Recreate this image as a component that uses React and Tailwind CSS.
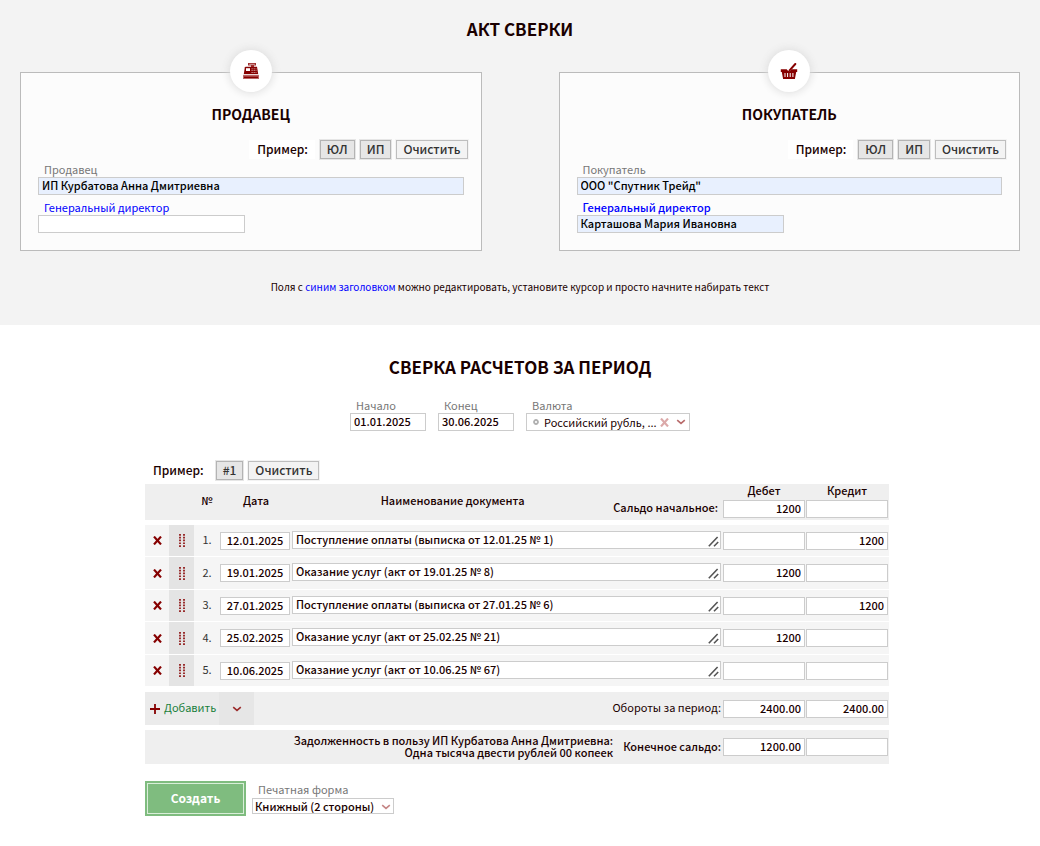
import React from "react";

const FIELD = "block w-full border border-[#cccccc] px-[3px] pb-[2px] text-[11px] leading-none outline-none";

function RegisterIcon() {
  return (
    <svg width="16" height="16" viewBox="0 0 16 16" aria-hidden="true">
      <path d="M5 0h8v2.400H11V4H8V2.400H5Z" fill="#a03030" />
      <rect x="6.200" y="0.900" width="5.600" height="0.700" fill="#e8caca" />
      <path d="M2.600 3.800H14L15.200 11H.8L1.800 4.600Z" fill="#860000" />
      <rect x="3" y="5.200" width="4" height="2.800" fill="#fff" />
      <path d="M8.500 5.400h1.200v.8H8.500zM10.600 5.400h1.200v.8h-1.200zM12.600 5.400h.8v.8h-.8zM8.500 7.200h1.200v.8H8.500zM10.600 7.200h1.200v.8h-1.200zM12.600 7.200h.8v.8h-.8zM8.500 9h1.200v.8H8.500zM10.600 9h1.200v.8h-1.200zM12.600 9h.8v.8h-.8z" fill="#e8caca" />
      <rect x="0" y="11.800" width="16" height="4.200" rx="0.600" fill="#b96464" />
      <rect x="1" y="13.600" width="14" height="1.400" fill="#860000" />
    </svg>
  );
}

function BasketIcon() {
  return (
    <svg width="18" height="17" viewBox="0 0 18 17" aria-hidden="true">
      <path d="M15.300 1 9.600 7.400" stroke="#860000" strokeWidth="2" strokeLinecap="round" />
      <path d="M.8 6.200h5.900q2.500 4 5 0h5.500v2.800h-1L14.900 16H3.100L1.800 9h-1Z" fill="#860000" />
      <path d="M5 10v4M7.600 10v4M10.200 10v4M12.900 10v4" stroke="#fff" strokeWidth="1" />
    </svg>
  );
}

function Chevron({ className }) {
  return (
    <svg className={className} width="10" height="6" viewBox="0 0 10 6" fill="none" aria-hidden="true">
      <path d="M1.200 1.200 5 4.400l3.800-3.200" stroke="currentColor" strokeWidth="1.600" />
    </svg>
  );
}

function CrossIcon({ className }) {
  return (
    <svg className={className} width="9" height="9" viewBox="0 0 9 9" fill="none" aria-hidden="true">
      <path d="M1 .6l7 7.800M8 .6 1 8.400" stroke="currentColor" strokeWidth="2.200" />
    </svg>
  );
}

function ExampleButton({ children }) {
  return (
    <button type="button" className="h-[19px] border border-[#b4b4b4] bg-[#e6e6e6] px-[6px] pb-[2px] text-[12px] leading-[15px] font-medium text-[#333333] shadow-[0_0_0_1px_#e6e6e6]">
      {children}
    </button>
  );
}

function ClearButton() {
  return (
    <button type="button" className="h-[19px] border border-[#bebebe] bg-[#f3f3f3] px-[6px] pb-[2px] text-[12px] leading-[15px] font-medium text-[#333333] shadow-[0_0_0_1px_#f3f3f3]">
      Очистить
    </button>
  );
}

function ExampleLabel() {
  return <span className="bg-white pr-[7px] pb-[2px] pl-[8px] text-[12px] leading-[17px] font-medium">Пример:</span>;
}

function Party({ id, icon, title, nameLabel, name, director }) {
  const filled = director !== "";
  return (
    <section className="min-w-0 border border-[#bbbbbb] bg-[#fcfcfc] pb-[17px]">
      <div className="mx-auto -mt-[23px] flex size-[42px] items-center justify-center rounded-full bg-white shadow-[0_0_8px_1px_#dddddd]">
        {icon}
      </div>
      <h2 className="mt-[12px] text-center text-[14px] leading-[20px] font-bold">{title}</h2>
      <div className="mt-[16px] flex items-center justify-end gap-[5px] pr-[13px]">
        <ExampleLabel />
        <ExampleButton>ЮЛ</ExampleButton>
        <ExampleButton>ИП</ExampleButton>
        <ClearButton />
      </div>
      <div className="px-[17px]">
        <label htmlFor={id + "-name"} className="mt-[2px] block pl-[6px] text-[11px] leading-[16px] text-[#777777]">
          {nameLabel}
        </label>
        <input id={id + "-name"} defaultValue={name} className={FIELD + " h-[18px] bg-[#e8f0fe] font-medium text-black"} />
        <label htmlFor={id + "-director"} className={"mt-[4px] block pl-[6px] text-[11px] leading-[16px] text-[#0000ff]" + (filled ? " font-medium" : "")}>
          Генеральный директор
        </label>
        <div className="max-w-[207px]">
          <input
            id={id + "-director"}
            defaultValue={director}
            className={FIELD + " h-[18px] font-medium text-black " + (filled ? "bg-[#e8f0fe]" : "bg-white")}
          />
        </div>
      </div>
    </section>
  );
}

const ROWS = [
  { date: "12.01.2025", name: "Поступление оплаты (выписка от 12.01.25 № 1)", debit: "", credit: "1200" },
  { date: "19.01.2025", name: "Оказание услуг (акт от 19.01.25 № 8)", debit: "1200", credit: "" },
  { date: "27.01.2025", name: "Поступление оплаты (выписка от 27.01.25 № 6)", debit: "", credit: "1200" },
  { date: "25.02.2025", name: "Оказание услуг (акт от 25.02.25 № 21)", debit: "1200", credit: "" },
  { date: "10.06.2025", name: "Оказание услуг (акт от 10.06.25 № 67)", debit: "", credit: "" },
];

function Amount({ label, value }) {
  return <input aria-label={label} defaultValue={value} className={FIELD + " h-[18px] bg-white text-right font-medium"} />;
}

function Row({ n, row }) {
  return (
    <tr className="h-[32px] bg-[#f5f5f5] even:h-[33px] [&>td]:border-b [&>td]:border-white">
      <td>
        <button type="button" aria-label="Удалить строку" className="mx-auto block text-[#860000]">
          <CrossIcon />
        </button>
      </td>
      <td className="bg-[#e4e4e4]">
        <svg className="mx-auto block" width="6" height="13" viewBox="0 0 6 13" aria-hidden="true">
          <path d="M1 0v13M5 0v13" stroke="#860000" strokeWidth="1.600" strokeDasharray="1.700 1.100" />
        </svg>
      </td>
      <td className="pb-[2px] text-center text-[11px] text-[#333333]">{n}.</td>
      <td className="pr-[2px]">
        <input aria-label={"Дата " + n} defaultValue={row.date} className={FIELD + " h-[18px] bg-white text-center font-medium"} />
      </td>
      <td className="pr-[2px] pb-[2px]">
        <div className="relative">
          <textarea
            aria-label={"Наименование документа " + n}
            rows={1}
            defaultValue={row.name}
            className={FIELD + " h-[18px] resize-none overflow-hidden bg-white !leading-[15px] font-medium"}
          />
          <svg className="absolute right-[2px] bottom-[2px]" width="11" height="11" viewBox="0 0 11 11" fill="none" aria-hidden="true">
            <path d="M.8 10.200 9.600 1M6 10.200l4.200-4.200" stroke="#555555" strokeWidth="1.600" />
          </svg>
        </div>
      </td>
      <td className="pr-[1px]"><Amount label={"Дебет " + n} value={row.debit} /></td>
      <td className="pr-[1px]"><Amount label={"Кредит " + n} value={row.credit} /></td>
    </tr>
  );
}

export default function App() {
  return (
    <main className="font-['Noto_Sans_CJK_JP','Open_Sans',sans-serif] text-[#1a0000]">
      <div className="bg-[#f3f3f3] px-[20px] pt-[17px] pb-[30px]">
        <h1 className="text-center text-[17px] leading-[24px] font-bold">АКТ СВЕРКИ</h1>
        <div className="mt-[31px] grid grid-cols-2 gap-[77px]">
          <Party id="seller" icon={<RegisterIcon />} title="ПРОДАВЕЦ" nameLabel="Продавец" name="ИП Курбатова Анна Дмитриевна" director="" />
          <Party id="buyer" icon={<BasketIcon />} title="ПОКУПАТЕЛЬ" nameLabel="Покупатель" name={'ООО "Спутник Трейд"'} director="Карташова Мария Ивановна" />
        </div>
        <p className="mt-[28px] text-center text-[10px] leading-[16px]">
          Поля с <span className="text-[#0000ff]">синим заголовком</span> можно редактировать, установите курсор и просто начните набирать текст
        </p>
      </div>

      <h2 className="mt-[30px] text-center text-[17px] leading-[24px] font-bold">СВЕРКА РАСЧЕТОВ ЗА ПЕРИОД</h2>

      <div className="mt-[19px] flex justify-center gap-[12px]">
        <div className="w-[76px]">
          <label htmlFor="start" className="block pl-[6px] text-[11px] leading-[15px] text-[#777777]">Начало</label>
          <input id="start" defaultValue="01.01.2025" className={FIELD + " h-[18px] font-medium"} />
        </div>
        <div className="w-[76px]">
          <label htmlFor="end" className="block pl-[6px] text-[11px] leading-[15px] text-[#777777]">Конец</label>
          <input id="end" defaultValue="30.06.2025" className={FIELD + " h-[18px] font-medium"} />
        </div>
        <div className="w-[164px]">
          <label htmlFor="currency" className="block pl-[6px] text-[11px] leading-[15px] text-[#777777]">Валюта</label>
          <div className="flex h-[18px] items-center border border-[#cccccc] pr-[3px] pl-[6px]">
            <svg width="6" height="6" viewBox="0 0 6 6" fill="none" aria-hidden="true">
              <circle cx="3" cy="3" r="2" stroke="#b0b0b0" strokeWidth="1.800" />
            </svg>
            <select id="currency" className="h-[16px] min-w-0 flex-1 appearance-none pl-[5px] text-[11px] leading-[16px] outline-none">
              <option>Российский рубль, ...</option>
            </select>
            <button type="button" aria-label="Очистить валюту" className="mr-[7px] text-[#dba9a9]"><CrossIcon /></button>
            <Chevron className="text-[#b86a6a]" />
          </div>
        </div>
      </div>

      <div className="mx-auto max-w-[750px] pr-[6px]">
        <div className="mt-[30px] flex items-center gap-[5px]">
          <ExampleLabel />
          <ExampleButton>#1</ExampleButton>
          <ClearButton />
        </div>

        <table className="mt-[4px] w-full table-fixed border-separate border-spacing-0 text-[11px]">
          <colgroup>
            <col className="w-[24px]" />
            <col className="w-[25px]" />
            <col className="w-[26px]" />
            <col className="w-[72px]" />
            <col />
            <col className="w-[83px]" />
            <col className="w-[83px]" />
          </colgroup>
          <thead>
            <tr className="h-[41px] bg-[#efefef] leading-[12px] [&>*]:border-b-[5px] [&>*]:border-white [&>th]:font-medium">
              <td colSpan={2} />
              <th className="pb-[4px]">№</th>
              <th className="pb-[4px]">Дата</th>
              <th>
                <div className="flex h-[36px] items-center pr-[5px]">
                  <span className="flex-1 pb-[4px]">Наименование документа</span>
                  <span className="self-end pb-[7px]">Сальдо начальное:</span>
                </div>
              </th>
              <th className="pr-[1px] align-top">
                <div className="mb-[4px]">Дебет</div>
                <Amount label="Сальдо начальное, дебет" value="1200" />
              </th>
              <th className="pr-[1px] align-top">
                <div className="mb-[4px]">Кредит</div>
                <Amount label="Сальдо начальное, кредит" value="" />
              </th>
            </tr>
          </thead>
          <tbody>
            {ROWS.map((row, i) => (
              <Row key={row.date} n={i + 1} row={row} />
            ))}
          </tbody>
          <tfoot>
            <tr className="h-[38px] bg-[#efefef] [&>td]:border-t-[5px] [&>td]:border-white">
              <td colSpan={4}>
                <div className="flex h-[33px]">
                  <button type="button" className="flex w-[74px] items-center gap-[4px] bg-[#ebebeb] pl-[5px] text-[#1a7f3c]">
                    <svg width="10" height="10" viewBox="0 0 10 10" aria-hidden="true">
                      <path d="M5 0v10M0 5h10" stroke="#860000" strokeWidth="1.800" />
                    </svg>
                    <span className="pb-[2px]">Добавить</span>
                  </button>
                  <button type="button" aria-label="Другие варианты" className="flex w-[35px] items-center justify-center bg-[#e6e6e6] text-[#9a2a2a]">
                    <Chevron />
                  </button>
                </div>
              </td>
              <td className="pr-[2px] pb-[2px] text-right">Обороты за период:</td>
              <td className="pr-[1px]"><Amount label="Обороты, дебет" value="2400.00" /></td>
              <td className="pr-[1px]"><Amount label="Обороты, кредит" value="2400.00" /></td>
            </tr>
            <tr className="h-[39px] bg-[#efefef] [&>td]:border-t-[5px] [&>td]:border-white">
              <td colSpan={5} className="pr-[2px] pb-[3px]">
                <div className="flex items-center justify-end gap-[10px] text-right leading-[12px] font-medium">
                  <p>
                    Задолженность в пользу ИП Курбатова Анна Дмитриевна:
                    <br />
                    Одна тысяча двести рублей 00 копеек
                  </p>
                  <span>Конечное сальдо:</span>
                </div>
              </td>
              <td className="pr-[1px]"><Amount label="Конечное сальдо, дебет" value="1200.00" /></td>
              <td className="pr-[1px]"><Amount label="Конечное сальдо, кредит" value="" /></td>
            </tr>
          </tfoot>
        </table>

        <div className="mt-[17px] flex gap-[6px] pb-[30px]">
          <button type="button" className="h-[35px] w-[101px] bg-[#7fbc7f] p-[2px] text-[12px] font-bold text-white">
            <span className="flex h-full items-center justify-center border border-[#d9eed9] pb-[2px]">Создать</span>
          </button>
          <div className="w-[142px]">
            <label htmlFor="form" className="mb-[1px] block pl-[6px] text-[11px] leading-[16px] text-[#777777]">Печатная форма</label>
            <div className="relative">
              <select id="form" className="block h-[16px] w-full appearance-none border border-[#cccccc] pl-[2px] text-[11px] leading-[14px] font-medium outline-none">
                <option>Книжный (2 стороны)</option>
              </select>
              <Chevron className="pointer-events-none absolute top-[6px] right-[3px] text-[#c58585]" />
            </div>
          </div>
        </div>
      </div>
    </main>
  );
}
